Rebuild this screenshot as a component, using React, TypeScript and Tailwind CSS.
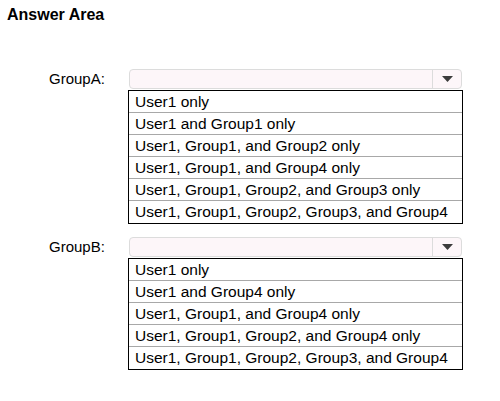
import React from "react";

const groupAOptions = [
  "User1 only",
  "User1 and Group1 only",
  "User1, Group1, and Group2 only",
  "User1, Group1, and Group4 only",
  "User1, Group1, Group2, and Group3 only",
  "User1, Group1, Group2, Group3, and Group4",
];

const groupBOptions = [
  "User1 only",
  "User1 and Group4 only",
  "User1, Group1, and Group4 only",
  "User1, Group1, Group2, and Group4 only",
  "User1, Group1, Group2, Group3, and Group4",
];

const Dropdown = ({ label, options }: { label: string; options: string[] }) => (
  <div className="flex">
    <div className="w-[128px] pl-[49px] h-[20px] flex items-center text-[15px] text-black">
      {label}
    </div>
    <div className="w-[335px] flex flex-col">
      {/* Select box */}
      <div className="mx-[1px] h-[20px] rounded-[4px] border border-[#dcdcdc] bg-[#fdf6f9] flex justify-end">
        <div className="w-[29px] border-l border-[#dcdcdc] flex items-center justify-center">
          <svg width="11" height="6" viewBox="0 0 11 6">
            <path d="M0 0 H11 L5.5 6 Z" fill="#3c3c3c" />
          </svg>
        </div>
      </div>
      {/* Options list */}
      <div className="mt-[1px] border border-black">
        {options.map((opt, i) => (
          <div
            key={opt}
            className={`h-[22px] leading-[21px] pl-[6px] text-[15.5px] text-black ${
              i < options.length - 1 ? "border-b border-[#a8a8a8]" : ""
            }`}
          >
            {opt}
          </div>
        ))}
      </div>
    </div>
  </div>
);

export default function App() {
  return (
    <div
      className="w-[500px] h-[401px] bg-white overflow-hidden"
      style={{ fontFamily: '"Liberation Sans", Arial, sans-serif' }}
    >
      <div className="pl-[7px] pt-[6px] text-[16px] leading-[18px] font-bold text-black">
        Answer Area
      </div>
      <div className="mt-[45px]">
        <Dropdown label="GroupA:" options={groupAOptions} />
      </div>
      <div className="mt-[13px]">
        <Dropdown label="GroupB:" options={groupBOptions} />
      </div>
    </div>
  );
}
